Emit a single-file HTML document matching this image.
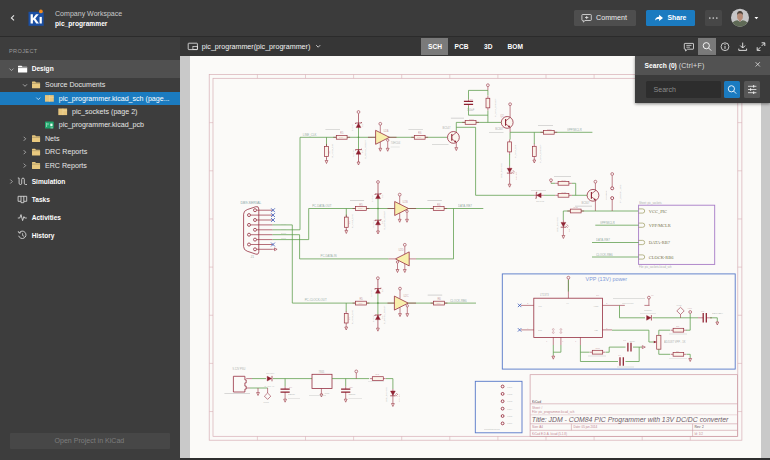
<!DOCTYPE html>
<html>
<head>
<meta charset="utf-8">
<style>
*{box-sizing:border-box;margin:0;padding:0}
html,body{width:770px;height:460px;overflow:hidden;background:#3b3b3b;font-family:"Liberation Sans",sans-serif;}
.abs{position:absolute}
.t{position:absolute;white-space:nowrap;line-height:10px;height:10px;color:#e6e6e6;font-size:7.1px}
.b{font-weight:700;color:#fff;font-size:6.6px}
#header{left:0;top:0;width:770px;height:37px;background:#3b3b3b;border-bottom:1px solid #2b2b2b}
#sidebar{left:0;top:37px;width:180px;height:423px;background:#3d3d3d}
#toolbar{left:180px;top:37px;width:590px;height:18.5px;background:#363636}
#canvas{left:180px;top:55.5px;width:590px;height:404.5px;background:#c9c9c9}
#paper{left:190px;top:55.5px;width:571.1px;height:404.5px;background:#fbfaf8}
</style>
</head>
<body>
<div class="abs" id="header"></div>
<div class="abs" id="sidebar"></div>
<div class="abs" id="toolbar"></div>
<div class="abs" id="canvas"></div>
<div class="abs" id="paper"></div>
<div class="abs" style="left:180px;top:458.4px;width:590px;height:1.6px;background:#2f2f2f"></div>

<!-- SCHEMATIC -->
<svg class="abs" id="sch" style="left:0;top:0" width="770" height="460" viewBox="0 0 770 460">
<rect x="209.2" y="74.5" width="532.7" height="365.7" fill="none" stroke="#d8aeb5" stroke-width="0.7"/>
<rect x="213" y="78.3" width="524.8" height="358" fill="none" stroke="#d8aeb5" stroke-width="0.7"/>
<path d="M257.40000000000003 74.5 L257.40000000000003 78.3" stroke="#d8aeb5" stroke-width="0.6" fill="none"/>
<path d="M257.40000000000003 436.3 L257.40000000000003 440.2" stroke="#d8aeb5" stroke-width="0.6" fill="none"/>
<path d="M305.5 74.5 L305.5 78.3" stroke="#d8aeb5" stroke-width="0.6" fill="none"/>
<path d="M305.5 436.3 L305.5 440.2" stroke="#d8aeb5" stroke-width="0.6" fill="none"/>
<path d="M353.6 74.5 L353.6 78.3" stroke="#d8aeb5" stroke-width="0.6" fill="none"/>
<path d="M353.6 436.3 L353.6 440.2" stroke="#d8aeb5" stroke-width="0.6" fill="none"/>
<path d="M401.70000000000005 74.5 L401.70000000000005 78.3" stroke="#d8aeb5" stroke-width="0.6" fill="none"/>
<path d="M401.70000000000005 436.3 L401.70000000000005 440.2" stroke="#d8aeb5" stroke-width="0.6" fill="none"/>
<path d="M449.8 74.5 L449.8 78.3" stroke="#d8aeb5" stroke-width="0.6" fill="none"/>
<path d="M449.8 436.3 L449.8 440.2" stroke="#d8aeb5" stroke-width="0.6" fill="none"/>
<path d="M497.90000000000003 74.5 L497.90000000000003 78.3" stroke="#d8aeb5" stroke-width="0.6" fill="none"/>
<path d="M497.90000000000003 436.3 L497.90000000000003 440.2" stroke="#d8aeb5" stroke-width="0.6" fill="none"/>
<path d="M546.0 74.5 L546.0 78.3" stroke="#d8aeb5" stroke-width="0.6" fill="none"/>
<path d="M546.0 436.3 L546.0 440.2" stroke="#d8aeb5" stroke-width="0.6" fill="none"/>
<path d="M594.1 74.5 L594.1 78.3" stroke="#d8aeb5" stroke-width="0.6" fill="none"/>
<path d="M594.1 436.3 L594.1 440.2" stroke="#d8aeb5" stroke-width="0.6" fill="none"/>
<path d="M642.2 74.5 L642.2 78.3" stroke="#d8aeb5" stroke-width="0.6" fill="none"/>
<path d="M642.2 436.3 L642.2 440.2" stroke="#d8aeb5" stroke-width="0.6" fill="none"/>
<path d="M690.3 74.5 L690.3 78.3" stroke="#d8aeb5" stroke-width="0.6" fill="none"/>
<path d="M690.3 436.3 L690.3 440.2" stroke="#d8aeb5" stroke-width="0.6" fill="none"/>
<path d="M209.4 122.65 L213 122.65" stroke="#d8aeb5" stroke-width="0.6" fill="none"/>
<path d="M737.8 122.65 L741.9 122.65" stroke="#d8aeb5" stroke-width="0.6" fill="none"/>
<path d="M209.4 170.8 L213 170.8" stroke="#d8aeb5" stroke-width="0.6" fill="none"/>
<path d="M737.8 170.8 L741.9 170.8" stroke="#d8aeb5" stroke-width="0.6" fill="none"/>
<path d="M209.4 218.95 L213 218.95" stroke="#d8aeb5" stroke-width="0.6" fill="none"/>
<path d="M737.8 218.95 L741.9 218.95" stroke="#d8aeb5" stroke-width="0.6" fill="none"/>
<path d="M209.4 267.1 L213 267.1" stroke="#d8aeb5" stroke-width="0.6" fill="none"/>
<path d="M737.8 267.1 L741.9 267.1" stroke="#d8aeb5" stroke-width="0.6" fill="none"/>
<path d="M209.4 315.25 L213 315.25" stroke="#d8aeb5" stroke-width="0.6" fill="none"/>
<path d="M737.8 315.25 L741.9 315.25" stroke="#d8aeb5" stroke-width="0.6" fill="none"/>
<path d="M209.4 363.4 L213 363.4" stroke="#d8aeb5" stroke-width="0.6" fill="none"/>
<path d="M737.8 363.4 L741.9 363.4" stroke="#d8aeb5" stroke-width="0.6" fill="none"/>
<path d="M209.4 411.55 L213 411.55" stroke="#d8aeb5" stroke-width="0.6" fill="none"/>
<path d="M737.8 411.55 L741.9 411.55" stroke="#d8aeb5" stroke-width="0.6" fill="none"/>
<path d="M300 229.8 L300 137.3 L447.5 137.3" fill="none" stroke="#5a9b48" stroke-width="0.75"/>
<path d="M326.5 137.3 L326.5 146" fill="none" stroke="#5a9b48" stroke-width="0.75"/>
<rect x="324.6" y="146.4" width="3.8" height="10.2" fill="#fbf3ea" stroke="#973041" stroke-width="0.7"/>
<path d="M326.5 143.9 L326.5 146.4" stroke="#973041" stroke-width="0.6" fill="none"/>
<path d="M326.5 156.6 L326.5 159.1" stroke="#973041" stroke-width="0.6" fill="none"/>
<path d="M326.5 158.5 L326.5 160.5" stroke="#973041" stroke-width="0.6" fill="none"/>
<path d="M325.1 160.5 h2.8 L326.5 163.5 z" fill="#fbf3ea" stroke="#973041" stroke-width="0.6"/>
<rect x="336.3" y="135.4" width="10.8" height="3.8" fill="#fbf3ea" stroke="#973041" stroke-width="0.7"/>
<path d="M333.3 137.3 L336.3 137.3" stroke="#973041" stroke-width="0.6" fill="none"/>
<path d="M347.09999999999997 137.3 L350.09999999999997 137.3" stroke="#973041" stroke-width="0.6" fill="none"/>
<path d="M358.5 113.5 L358.5 127.8" stroke="#973041" stroke-width="0.7" fill="none"/>
<path d="M358.5 149.2 L358.5 162" stroke="#973041" stroke-width="0.7" fill="none"/>
<path d="M358.5 127.8 L358.5 149.2" fill="none" stroke="#5a9b48" stroke-width="0.75"/>
<circle cx="358.5" cy="112" r="1.4" fill="#fbfaf8" stroke="#973041" stroke-width="0.6"/>
<path d="M356.1 127.60000000000001 h4.8 L358.5 123.2 z" fill="#8e1f2f" stroke="#8e1f2f" stroke-width="0.4"/>
<path d="M355.5 123.89999999999999 v-0.9 h6.0 v-0.9" fill="none" stroke="#8e1f2f" stroke-width="0.7"/>
<path d="M356.1 154.20000000000002 h4.8 L358.5 149.8 z" fill="#8e1f2f" stroke="#8e1f2f" stroke-width="0.4"/>
<path d="M355.5 150.5 v-0.9 h6.0 v-0.9" fill="none" stroke="#8e1f2f" stroke-width="0.7"/>
<path d="M357.1 162 h2.8 L358.5 165 z" fill="#fbf3ea" stroke="#973041" stroke-width="0.6"/>
<circle cx="358.5" cy="137.3" r="0.8" fill="#5a9b48"/>
<path d="M368 137.3 L375.6 137.3" stroke="#973041" stroke-width="0.6" fill="none"/>
<path d="M389.2 137.3 L396.5 137.3" stroke="#973041" stroke-width="0.6" fill="none"/>
<path d="M380.3 125.2 L380.3 133" stroke="#973041" stroke-width="0.6" fill="none"/>
<circle cx="380.3" cy="123.8" r="1.4" fill="#fbfaf8" stroke="#973041" stroke-width="0.6"/>
<path d="M380.3 142 L380.3 148.5" stroke="#973041" stroke-width="0.6" fill="none"/>
<path d="M378.90000000000003 148.3 h2.8 L380.3 151.3 z" fill="#fbf3ea" stroke="#973041" stroke-width="0.6"/>
<path d="M387.7 141.4 L387.7 148.5" stroke="#973041" stroke-width="0.6" fill="none"/>
<path d="M386.3 148.3 h2.8 L387.7 151.3 z" fill="#fbf3ea" stroke="#973041" stroke-width="0.6"/>
<path d="M375.6 130.3 L389.40000000000003 137.3 L375.6 144.3 z" fill="#f8efac" stroke="#973041" stroke-width="0.8" stroke-linejoin="round"/>
<circle cx="387.7" cy="140.2" r="1.2" fill="#fbfaf8" stroke="#973041" stroke-width="0.6"/>
<rect x="414.3" y="135.4" width="10.8" height="3.8" fill="#fbf3ea" stroke="#973041" stroke-width="0.7"/>
<path d="M411.3 137.3 L414.3 137.3" stroke="#973041" stroke-width="0.6" fill="none"/>
<path d="M425.09999999999997 137.3 L428.09999999999997 137.3" stroke="#973041" stroke-width="0.6" fill="none"/>
<path d="M447.5 137.4 L451.6 137.4" stroke="#973041" stroke-width="0.7" fill="none"/>
<path d="M456.3 131.5 L456.3 122.4 L501.4 122.4" fill="none" stroke="#5a9b48" stroke-width="0.75"/>
<path d="M456.3 127.3 L475.6 127.3 L475.6 195.3 L534 195.3" fill="none" stroke="#5a9b48" stroke-width="0.75"/>
<circle cx="453.4" cy="137.4" r="5.9" fill="#fbf6f0" stroke="#973041" stroke-width="0.8"/>
<path d="M451.79999999999995 134.0 v6.8" stroke="#8e1f2f" stroke-width="1.1"/>
<path d="M451.79999999999995 136.0 L456.29999999999995 132.5 M451.79999999999995 138.8 L456.29999999999995 142.3" stroke="#973041" stroke-width="0.7" fill="none"/>
<path d="M456.29999999999995 142.3 l-2.3 -0.3 l1.3 -1.7 z" fill="#8e1f2f"/>
<path d="M456.3 131.5 L456.3 133" stroke="#973041" stroke-width="0.6" fill="none"/>
<path d="M456.3 142 L456.3 147.5" stroke="#973041" stroke-width="0.6" fill="none"/>
<path d="M454.90000000000003 147.6 h2.8 L456.3 150.6 z" fill="#fbf3ea" stroke="#973041" stroke-width="0.6"/>
<rect x="465.20000000000005" y="120.5" width="10.8" height="3.8" fill="#fbf3ea" stroke="#973041" stroke-width="0.7"/>
<path d="M462.20000000000005 122.4 L465.20000000000005 122.4" stroke="#973041" stroke-width="0.6" fill="none"/>
<path d="M476.0 122.4 L479.0 122.4" stroke="#973041" stroke-width="0.6" fill="none"/>
<path d="M487.9 90.4 L468.5 90.4 L468.5 99.5" fill="none" stroke="#5a9b48" stroke-width="0.75"/>
<path d="M468.5 106 L468.5 115.2 L487.9 115.2" fill="none" stroke="#5a9b48" stroke-width="0.75"/>
<path d="M487.9 90.4 L487.9 95.5" fill="none" stroke="#5a9b48" stroke-width="0.75"/>
<path d="M487.9 110.5 L487.9 122.4" fill="none" stroke="#5a9b48" stroke-width="0.75"/>
<path d="M468.5 99.5 L468.5 101.3" stroke="#973041" stroke-width="0.6" fill="none"/>
<path d="M468.5 104.4 L468.5 106" stroke="#973041" stroke-width="0.6" fill="none"/>
<path d="M463.9 101.35 h9.2 M463.9 104.35 h9.2" stroke="#8e1f2f" stroke-width="1.25"/>
<rect x="486.0" y="98.25" width="3.8" height="9.6" fill="#fbf3ea" stroke="#973041" stroke-width="0.7"/>
<path d="M487.9 95.75 L487.9 98.25" stroke="#973041" stroke-width="0.6" fill="none"/>
<path d="M487.9 107.85 L487.9 110.35" stroke="#973041" stroke-width="0.6" fill="none"/>
<path d="M487.9 86.60000000000001 L487.9 90.4" stroke="#973041" stroke-width="0.6" fill="none"/>
<circle cx="487.9" cy="85.2" r="1.4" fill="#fbfaf8" stroke="#973041" stroke-width="0.6"/>
<path d="M501.4 122.4 L505.6 122.4" stroke="#973041" stroke-width="0.7" fill="none"/>
<circle cx="507.2" cy="122.4" r="5.9" fill="#fbf6f0" stroke="#973041" stroke-width="0.8"/>
<path d="M505.59999999999997 119.0 v6.8" stroke="#8e1f2f" stroke-width="1.1"/>
<path d="M505.59999999999997 121.0 L510.09999999999997 117.5 M505.59999999999997 123.80000000000001 L510.09999999999997 127.30000000000001" stroke="#973041" stroke-width="0.7" fill="none"/>
<path d="M510.09999999999997 127.30000000000001 l-2.3 -0.3 l1.3 -1.7 z" fill="#8e1f2f"/>
<path d="M510.1 105.60000000000001 L510.1 117.5" stroke="#973041" stroke-width="0.6" fill="none"/>
<circle cx="510.1" cy="104.2" r="1.4" fill="#fbfaf8" stroke="#973041" stroke-width="0.6"/>
<path d="M510.1 127.3 L510.1 132.3" stroke="#973041" stroke-width="0.6" fill="none"/>
<path d="M510.1 132.3 L592.4 132.3" fill="none" stroke="#5a9b48" stroke-width="0.75"/>
<path d="M510.1 132.3 L510.1 139.5" fill="none" stroke="#5a9b48" stroke-width="0.75"/>
<rect x="507.70000000000005" y="141.9" width="3.8" height="10" fill="#fbf3ea" stroke="#973041" stroke-width="0.7"/>
<path d="M509.6 139.4 L509.6 141.9" stroke="#973041" stroke-width="0.6" fill="none"/>
<path d="M509.6 151.9 L509.6 154.4" stroke="#973041" stroke-width="0.6" fill="none"/>
<path d="M509.6 154 L509.6 166" fill="none" stroke="#5a9b48" stroke-width="0.75"/>
<path d="M507.20000000000005 168.29999999999998 h4.8 L509.6 172.7 z" fill="#8e1f2f" stroke="#8e1f2f" stroke-width="0.4"/>
<path d="M506.90000000000003 173.1 h5.3999999999999995" fill="none" stroke="#8e1f2f" stroke-width="0.7"/>
<path d="M512.2 171.7 l1.6 2 M513.0 170.29999999999998 l1.6 2" stroke="#973041" stroke-width="0.5"/>
<path d="M509.6 166 L509.6 184" stroke="#973041" stroke-width="0.6" fill="none"/>
<path d="M508.20000000000005 184.2 h2.8 L509.6 187.2 z" fill="#fbf3ea" stroke="#973041" stroke-width="0.6"/>
<path d="M534.3 132.3 L534.3 144" fill="none" stroke="#5a9b48" stroke-width="0.75"/>
<rect x="532.4" y="146.3" width="3.8" height="10.2" fill="#fbf3ea" stroke="#973041" stroke-width="0.7"/>
<path d="M534.3 143.8 L534.3 146.3" stroke="#973041" stroke-width="0.6" fill="none"/>
<path d="M534.3 156.5 L534.3 159.0" stroke="#973041" stroke-width="0.6" fill="none"/>
<path d="M534.3 158.8 L534.3 160" stroke="#973041" stroke-width="0.6" fill="none"/>
<path d="M532.9 160 h2.8 L534.3 163 z" fill="#fbf3ea" stroke="#973041" stroke-width="0.6"/>
<rect x="543.4" y="130.4" width="10.8" height="3.8" fill="#fbf3ea" stroke="#973041" stroke-width="0.7"/>
<path d="M540.4 132.3 L543.4 132.3" stroke="#973041" stroke-width="0.6" fill="none"/>
<path d="M554.1999999999999 132.3 L557.1999999999999 132.3" stroke="#973041" stroke-width="0.6" fill="none"/>
<path d="M541.1 192.9 v4.8 L536.7 195.3 z" fill="#8e1f2f" stroke="#8e1f2f" stroke-width="0.4"/>
<path d="M537.2 192.3 h-0.9 v6.0 h-0.9" fill="none" stroke="#8e1f2f" stroke-width="0.7"/>
<path d="M534 195.3 L544 195.3" stroke="#973041" stroke-width="0.6" fill="none"/>
<path d="M544 195.3 L555 195.3" fill="none" stroke="#5a9b48" stroke-width="0.75"/>
<rect x="558.1" y="193.4" width="10.8" height="3.8" fill="#fbf3ea" stroke="#973041" stroke-width="0.7"/>
<path d="M555.1 195.3 L558.1 195.3" stroke="#973041" stroke-width="0.6" fill="none"/>
<path d="M568.9 195.3 L571.9 195.3" stroke="#973041" stroke-width="0.6" fill="none"/>
<path d="M572 195.3 L587 195.3" fill="none" stroke="#5a9b48" stroke-width="0.75"/>
<path d="M551 181.6 L551 183.3" stroke="#973041" stroke-width="0.6" fill="none"/>
<circle cx="551" cy="180.2" r="1.4" fill="#fbfaf8" stroke="#973041" stroke-width="0.6"/>
<path d="M551 183.3 L555 183.3" fill="none" stroke="#5a9b48" stroke-width="0.75"/>
<rect x="558.1" y="181.4" width="10.8" height="3.8" fill="#fbf3ea" stroke="#973041" stroke-width="0.7"/>
<path d="M555.1 183.3 L558.1 183.3" stroke="#973041" stroke-width="0.6" fill="none"/>
<path d="M568.9 183.3 L571.9 183.3" stroke="#973041" stroke-width="0.6" fill="none"/>
<path d="M572 183.3 L575.7 183.3 L575.7 195.3" fill="none" stroke="#5a9b48" stroke-width="0.75"/>
<path d="M587 195.3 L591.4 195.3" stroke="#973041" stroke-width="0.7" fill="none"/>
<circle cx="593" cy="195.3" r="5.9" fill="#fbf6f0" stroke="#973041" stroke-width="0.8"/>
<path d="M591.4 191.9 v6.8" stroke="#8e1f2f" stroke-width="1.1"/>
<path d="M591.4 193.9 L595.9 190.4 M591.4 196.70000000000002 L595.9 200.20000000000002" stroke="#973041" stroke-width="0.7" fill="none"/>
<path d="M595.9 200.20000000000002 l-2.3 -0.3 l1.3 -1.7 z" fill="#8e1f2f"/>
<path d="M595.4 183.1 L595.4 190.4" stroke="#973041" stroke-width="0.6" fill="none"/>
<circle cx="595.4" cy="181.7" r="1.4" fill="#fbfaf8" stroke="#973041" stroke-width="0.6"/>
<path d="M595.4 200.2 L595.4 211" stroke="#973041" stroke-width="0.6" fill="none"/>
<path d="M563.3 220 L563.3 211 L638.6 211" fill="none" stroke="#5a9b48" stroke-width="0.75"/>
<rect x="570.3000000000001" y="209.1" width="10.8" height="3.8" fill="#fbf3ea" stroke="#973041" stroke-width="0.7"/>
<path d="M567.3000000000001 211 L570.3000000000001 211" stroke="#973041" stroke-width="0.6" fill="none"/>
<path d="M581.1 211 L584.1 211" stroke="#973041" stroke-width="0.6" fill="none"/>
<path d="M561.0 222.4 h4.8 L563.4 226.8 z" fill="#8e1f2f" stroke="#8e1f2f" stroke-width="0.4"/>
<path d="M560.7 227.20000000000002 h5.3999999999999995" fill="none" stroke="#8e1f2f" stroke-width="0.7"/>
<path d="M566.0 225.8 l1.6 2 M566.8 224.4 l1.6 2" stroke="#973041" stroke-width="0.5"/>
<path d="M563.4 220 L563.4 235.5" stroke="#973041" stroke-width="0.6" fill="none"/>
<path d="M562.0 235.5 h2.8 L563.4 238.5 z" fill="#fbf3ea" stroke="#973041" stroke-width="0.6"/>
<path d="M612.2 175.4 L612.2 186.8" stroke="#973041" stroke-width="0.6" fill="none"/>
<path d="M612.2 199.6 L612.2 211" stroke="#973041" stroke-width="0.6" fill="none"/>
<circle cx="612.2" cy="174" r="1.4" fill="#fbfaf8" stroke="#973041" stroke-width="0.6"/>
<circle cx="612.2" cy="188.3" r="1.5" fill="#fbfaf8" stroke="#973041" stroke-width="0.8"/>
<circle cx="612.2" cy="198.1" r="1.5" fill="#fbfaf8" stroke="#973041" stroke-width="0.8"/>
<rect x="638.6" y="205.2" width="76.1" height="59.2" fill="none" stroke="#a77bc6" stroke-width="0.9"/>
<path d="M638.6 208.9 h4 a2.1 2.1 0 0 1 0 4.2 h-4" fill="none" stroke="#8c8a46" stroke-width="0.6"/>
<text x="648.8" y="212.5" font-family="Liberation Serif" font-size="4.45" fill="#6c6a3c" opacity="0.92" text-anchor="start" >VCC_PIC</text>
<path d="M638.6 223.1 h4 a2.1 2.1 0 0 1 0 4.2 h-4" fill="none" stroke="#8c8a46" stroke-width="0.6"/>
<text x="648.8" y="226.7" font-family="Liberation Serif" font-size="4.45" fill="#6c6a3c" opacity="0.92" text-anchor="start" >VPP/MCLR</text>
<path d="M638.6 240.4 h4 a2.1 2.1 0 0 1 0 4.2 h-4" fill="none" stroke="#8c8a46" stroke-width="0.6"/>
<text x="648.8" y="244.0" font-family="Liberation Serif" font-size="4.45" fill="#6c6a3c" opacity="0.92" text-anchor="start" >DATA-RB7</text>
<path d="M638.6 254.9 h4 a2.1 2.1 0 0 1 0 4.2 h-4" fill="none" stroke="#8c8a46" stroke-width="0.6"/>
<text x="648.8" y="258.5" font-family="Liberation Serif" font-size="4.45" fill="#6c6a3c" opacity="0.92" text-anchor="start" >CLOCK-RB6</text>
<path d="M595.3 225.2 L638.6 225.2" fill="none" stroke="#5a9b48" stroke-width="0.75"/>
<path d="M592 242.5 L638.6 242.5" fill="none" stroke="#5a9b48" stroke-width="0.75"/>
<path d="M592 257 L638.6 257" fill="none" stroke="#5a9b48" stroke-width="0.75"/>
<path d="M247.2 209.6 L255.8 206.7 Q258.8 205.9 258.8 209 L258.8 251.6 Q258.8 254.9 255.8 254.1 L247.2 251.2 Q243.6 250 243.6 246.6 L243.6 214.2 Q243.6 210.8 247.2 209.6 z" fill="none" stroke="#973041" stroke-width="0.8"/>
<path d="M256.4 210.2 L272.5 210.2" stroke="#973041" stroke-width="0.7" fill="none"/>
<circle cx="255" cy="210.2" r="1.5" fill="#fbfaf8" stroke="#973041" stroke-width="0.8"/>
<path d="M256.4 220 L272.5 220" stroke="#973041" stroke-width="0.7" fill="none"/>
<circle cx="255" cy="220" r="1.5" fill="#fbfaf8" stroke="#973041" stroke-width="0.8"/>
<path d="M256.4 229.8 L272.5 229.8" stroke="#973041" stroke-width="0.7" fill="none"/>
<circle cx="255" cy="229.8" r="1.5" fill="#fbfaf8" stroke="#973041" stroke-width="0.8"/>
<path d="M256.4 239.6 L272.5 239.6" stroke="#973041" stroke-width="0.7" fill="none"/>
<circle cx="255" cy="239.6" r="1.5" fill="#fbfaf8" stroke="#973041" stroke-width="0.8"/>
<path d="M256.4 249.3 L272.5 249.3" stroke="#973041" stroke-width="0.7" fill="none"/>
<circle cx="255" cy="249.3" r="1.5" fill="#fbfaf8" stroke="#973041" stroke-width="0.8"/>
<path d="M250.4 215.1 L272.5 215.1" stroke="#973041" stroke-width="0.7" fill="none"/>
<circle cx="249" cy="215.1" r="1.5" fill="#fbfaf8" stroke="#973041" stroke-width="0.8"/>
<path d="M250.4 224.9 L272.5 224.9" stroke="#973041" stroke-width="0.7" fill="none"/>
<circle cx="249" cy="224.9" r="1.5" fill="#fbfaf8" stroke="#973041" stroke-width="0.8"/>
<path d="M250.4 234.7 L272.5 234.7" stroke="#973041" stroke-width="0.7" fill="none"/>
<circle cx="249" cy="234.7" r="1.5" fill="#fbfaf8" stroke="#973041" stroke-width="0.8"/>
<path d="M250.4 244.5 L272.5 244.5" stroke="#973041" stroke-width="0.7" fill="none"/>
<circle cx="249" cy="244.5" r="1.5" fill="#fbfaf8" stroke="#973041" stroke-width="0.8"/>
<path d="M271.1 208.29999999999998 l3.8 3.8 M274.9 208.29999999999998 l-3.8 3.8" stroke="#3656b8" stroke-width="0.8"/>
<path d="M271.1 213.2 l3.8 3.8 M274.9 213.2 l-3.8 3.8" stroke="#3656b8" stroke-width="0.8"/>
<path d="M271.1 218.1 l3.8 3.8 M274.9 218.1 l-3.8 3.8" stroke="#3656b8" stroke-width="0.8"/>
<path d="M271.1 242.6 l3.8 3.8 M274.9 242.6 l-3.8 3.8" stroke="#3656b8" stroke-width="0.8"/>
<path d="M274.5 247.9 l2.6 1.4 l-2.6 1.4 z" fill="none" stroke="#973041" stroke-width="0.6"/>
<path d="M272.5 249.3 L274.5 249.3" stroke="#973041" stroke-width="0.6" fill="none"/>
<path d="M272.5 224.9 L292.3 224.9 L292.3 303.1 L476 303.1" fill="none" stroke="#5a9b48" stroke-width="0.75"/>
<path d="M272.5 229.8 L300 229.8" fill="none" stroke="#5a9b48" stroke-width="0.75"/>
<path d="M272.5 234.7 L299.6 234.7 L299.6 258.9 L388.5 258.9" fill="none" stroke="#5a9b48" stroke-width="0.75"/>
<path d="M272.5 239.6 L308.7 239.6 L308.7 208.5 L483.3 208.5" fill="none" stroke="#5a9b48" stroke-width="0.75"/>
<path d="M346.3 208.5 L346.3 217" fill="none" stroke="#5a9b48" stroke-width="0.75"/>
<rect x="344.40000000000003" y="217.1" width="3.8" height="10.2" fill="#fbf3ea" stroke="#973041" stroke-width="0.7"/>
<path d="M346.3 214.6 L346.3 217.1" stroke="#973041" stroke-width="0.6" fill="none"/>
<path d="M346.3 227.29999999999998 L346.3 229.79999999999998" stroke="#973041" stroke-width="0.6" fill="none"/>
<path d="M346.3 229.0 L346.3 230.5" stroke="#973041" stroke-width="0.6" fill="none"/>
<path d="M344.90000000000003 230.5 h2.8 L346.3 233.5 z" fill="#fbf3ea" stroke="#973041" stroke-width="0.6"/>
<rect x="355.5" y="206.6" width="10.8" height="3.8" fill="#fbf3ea" stroke="#973041" stroke-width="0.7"/>
<path d="M352.5 208.5 L355.5 208.5" stroke="#973041" stroke-width="0.6" fill="none"/>
<path d="M366.29999999999995 208.5 L369.29999999999995 208.5" stroke="#973041" stroke-width="0.6" fill="none"/>
<path d="M378 183.5 L378 198.8" stroke="#973041" stroke-width="0.7" fill="none"/>
<path d="M378 219.8 L378 231" stroke="#973041" stroke-width="0.7" fill="none"/>
<path d="M378 198.8 L378 219.8" fill="none" stroke="#5a9b48" stroke-width="0.75"/>
<circle cx="378" cy="182" r="1.4" fill="#fbfaf8" stroke="#973041" stroke-width="0.6"/>
<path d="M375.6 198.6 h4.8 L378 194.2 z" fill="#8e1f2f" stroke="#8e1f2f" stroke-width="0.4"/>
<path d="M375.0 194.89999999999998 v-0.9 h6.0 v-0.9" fill="none" stroke="#8e1f2f" stroke-width="0.7"/>
<path d="M375.6 224.8 h4.8 L378 220.4 z" fill="#8e1f2f" stroke="#8e1f2f" stroke-width="0.4"/>
<path d="M375.0 221.1 v-0.9 h6.0 v-0.9" fill="none" stroke="#8e1f2f" stroke-width="0.7"/>
<path d="M376.6 231 h2.8 L378 234 z" fill="#fbf3ea" stroke="#973041" stroke-width="0.6"/>
<circle cx="378" cy="208.5" r="0.8" fill="#5a9b48"/>
<path d="M387.5 208.5 L394.6 208.5" stroke="#973041" stroke-width="0.6" fill="none"/>
<path d="M408.6 208.5 L416 208.5" stroke="#973041" stroke-width="0.6" fill="none"/>
<path d="M399.7 196 L399.7 204" stroke="#973041" stroke-width="0.6" fill="none"/>
<circle cx="399.7" cy="194.6" r="1.4" fill="#fbfaf8" stroke="#973041" stroke-width="0.6"/>
<path d="M399.7 213 L399.7 219.5" stroke="#973041" stroke-width="0.6" fill="none"/>
<path d="M398.3 219.3 h2.8 L399.7 222.3 z" fill="#fbf3ea" stroke="#973041" stroke-width="0.6"/>
<path d="M407 212.5 L407 219.5" stroke="#973041" stroke-width="0.6" fill="none"/>
<path d="M405.6 219.3 h2.8 L407 222.3 z" fill="#fbf3ea" stroke="#973041" stroke-width="0.6"/>
<path d="M394.7 201.5 L408.5 208.5 L394.7 215.5 z" fill="#f8efac" stroke="#973041" stroke-width="0.8" stroke-linejoin="round"/>
<circle cx="407" cy="211.3" r="1.2" fill="#fbfaf8" stroke="#973041" stroke-width="0.6"/>
<rect x="433.3" y="206.6" width="10.8" height="3.8" fill="#fbf3ea" stroke="#973041" stroke-width="0.7"/>
<path d="M430.3 208.5 L433.3 208.5" stroke="#973041" stroke-width="0.6" fill="none"/>
<path d="M444.09999999999997 208.5 L447.09999999999997 208.5" stroke="#973041" stroke-width="0.6" fill="none"/>
<path d="M453.5 208.5 L453.5 258.9 L416 258.9" fill="none" stroke="#5a9b48" stroke-width="0.75"/>
<path d="M475.4 170 L475.4 170" fill="none" stroke="#5a9b48" stroke-width="0.75"/>
<path d="M388.5 258.9 L395.2 258.9" stroke="#973041" stroke-width="0.6" fill="none"/>
<path d="M409.2 258.9 L416 258.9" stroke="#973041" stroke-width="0.6" fill="none"/>
<path d="M404.8 246.2 L404.8 254.5" stroke="#973041" stroke-width="0.6" fill="none"/>
<circle cx="404.8" cy="244.8" r="1.4" fill="#fbfaf8" stroke="#973041" stroke-width="0.6"/>
<path d="M404.8 263.5 L404.8 269.6" stroke="#973041" stroke-width="0.6" fill="none"/>
<path d="M403.40000000000003 269.5 h2.8 L404.8 272.5 z" fill="#fbf3ea" stroke="#973041" stroke-width="0.6"/>
<path d="M397.5 263.2 L397.5 269.6" stroke="#973041" stroke-width="0.6" fill="none"/>
<path d="M396.1 269.5 h2.8 L397.5 272.5 z" fill="#fbf3ea" stroke="#973041" stroke-width="0.6"/>
<path d="M409.2 251.89999999999998 L395.4 258.9 L409.2 265.9 z" fill="#f8efac" stroke="#973041" stroke-width="0.8" stroke-linejoin="round"/>
<circle cx="397.5" cy="262" r="1.2" fill="#fbfaf8" stroke="#973041" stroke-width="0.6"/>
<path d="M346.2 303.1 L346.2 311.5" fill="none" stroke="#5a9b48" stroke-width="0.75"/>
<rect x="344.3" y="313.6" width="3.8" height="9.4" fill="#fbf3ea" stroke="#973041" stroke-width="0.7"/>
<path d="M346.2 311.1 L346.2 313.6" stroke="#973041" stroke-width="0.6" fill="none"/>
<path d="M346.2 323.0 L346.2 325.5" stroke="#973041" stroke-width="0.6" fill="none"/>
<path d="M346.2 325.5 L346.2 327" stroke="#973041" stroke-width="0.6" fill="none"/>
<path d="M344.8 327 h2.8 L346.2 330 z" fill="#fbf3ea" stroke="#973041" stroke-width="0.6"/>
<rect x="355.6" y="301.20000000000005" width="10.8" height="3.8" fill="#fbf3ea" stroke="#973041" stroke-width="0.7"/>
<path d="M352.6 303.1 L355.6 303.1" stroke="#973041" stroke-width="0.6" fill="none"/>
<path d="M366.4 303.1 L369.4 303.1" stroke="#973041" stroke-width="0.6" fill="none"/>
<path d="M377.9 279.6 L377.9 293.4" stroke="#973041" stroke-width="0.7" fill="none"/>
<path d="M377.9 314.6 L377.9 328" stroke="#973041" stroke-width="0.7" fill="none"/>
<path d="M377.9 293.4 L377.9 314.6" fill="none" stroke="#5a9b48" stroke-width="0.75"/>
<circle cx="377.9" cy="278.2" r="1.4" fill="#fbfaf8" stroke="#973041" stroke-width="0.6"/>
<path d="M375.5 293.2 h4.8 L377.9 288.8 z" fill="#8e1f2f" stroke="#8e1f2f" stroke-width="0.4"/>
<path d="M374.9 289.50000000000006 v-0.9 h6.0 v-0.9" fill="none" stroke="#8e1f2f" stroke-width="0.7"/>
<path d="M375.5 319.59999999999997 h4.8 L377.9 315.2 z" fill="#8e1f2f" stroke="#8e1f2f" stroke-width="0.4"/>
<path d="M374.9 315.90000000000003 v-0.9 h6.0 v-0.9" fill="none" stroke="#8e1f2f" stroke-width="0.7"/>
<path d="M376.5 328.2 h2.8 L377.9 331.2 z" fill="#fbf3ea" stroke="#973041" stroke-width="0.6"/>
<circle cx="377.9" cy="303.1" r="0.8" fill="#5a9b48"/>
<path d="M387.5 303.1 L394.4 303.1" stroke="#973041" stroke-width="0.6" fill="none"/>
<path d="M408.4 303.1 L416 303.1" stroke="#973041" stroke-width="0.6" fill="none"/>
<path d="M400 290 L400 298.5" stroke="#973041" stroke-width="0.6" fill="none"/>
<circle cx="400" cy="288.6" r="1.4" fill="#fbfaf8" stroke="#973041" stroke-width="0.6"/>
<path d="M400 307.5 L400 313.8" stroke="#973041" stroke-width="0.6" fill="none"/>
<path d="M398.6 313.6 h2.8 L400 316.6 z" fill="#fbf3ea" stroke="#973041" stroke-width="0.6"/>
<path d="M407.3 307 L407.3 313.8" stroke="#973041" stroke-width="0.6" fill="none"/>
<path d="M405.90000000000003 313.6 h2.8 L407.3 316.6 z" fill="#fbf3ea" stroke="#973041" stroke-width="0.6"/>
<path d="M394.4 296.1 L408.2 303.1 L394.4 310.1 z" fill="#f8efac" stroke="#973041" stroke-width="0.8" stroke-linejoin="round"/>
<circle cx="407.3" cy="305.8" r="1.2" fill="#fbfaf8" stroke="#973041" stroke-width="0.6"/>
<rect x="433.6" y="301.20000000000005" width="10.8" height="3.8" fill="#fbf3ea" stroke="#973041" stroke-width="0.7"/>
<path d="M430.6 303.1 L433.6 303.1" stroke="#973041" stroke-width="0.6" fill="none"/>
<path d="M444.4 303.1 L447.4 303.1" stroke="#973041" stroke-width="0.6" fill="none"/>
<rect x="502.3" y="273.9" width="232.9" height="95.2" fill="none" stroke="#5577c8" stroke-width="0.9"/>
<text x="585.6" y="281.2" font-family="Liberation Sans" font-size="5.4" fill="#5a7fd0" opacity="0.78" text-anchor="start" >VPP (13V) power</text>
<rect x="533.8" y="298.2" width="68.7" height="39.2" fill="none" stroke="#973041" stroke-width="0.8"/>
<path d="M568.4 279.09999999999997 L568.4 298.2" stroke="#973041" stroke-width="0.6" fill="none"/>
<circle cx="568.4" cy="277.7" r="1.4" fill="#fbfaf8" stroke="#973041" stroke-width="0.6"/>
<path d="M568.4 280 L568.4 291.5" fill="none" stroke="#5a9b48" stroke-width="0.75"/>
<path d="M521 305.4 L533.8 305.4" stroke="#973041" stroke-width="0.6" fill="none"/>
<path d="M517.9 303.7 l3.4 3.4 M521.3000000000001 303.7 l-3.4 3.4" stroke="#3656b8" stroke-width="0.8"/>
<path d="M521 329.9 L533.8 329.9" stroke="#973041" stroke-width="0.6" fill="none"/>
<path d="M517.9 328.2 l3.4 3.4 M521.3000000000001 328.2 l-3.4 3.4" stroke="#3656b8" stroke-width="0.8"/>
<path d="M602.5 305.4 L624.8 305.4" stroke="#973041" stroke-width="0.6" fill="none"/>
<path d="M619.5 305.4 L619.5 317.8 L645 317.8" fill="none" stroke="#5a9b48" stroke-width="0.75"/>
<path d="M646.6 315.40000000000003 v4.8 L651.0 317.8 z" fill="#8e1f2f" stroke="#8e1f2f" stroke-width="0.4"/>
<path d="M651.4 315.1 v5.3999999999999995" fill="none" stroke="#8e1f2f" stroke-width="0.7"/>
<path d="M652.5 317.8 L690.2 317.8" fill="none" stroke="#5a9b48" stroke-width="0.75"/>
<path d="M690.2 313.4 L690.2 330.2 L686 330.2" fill="none" stroke="#5a9b48" stroke-width="0.75"/>
<path d="M690.2 317.8 L698 317.8" fill="none" stroke="#5a9b48" stroke-width="0.75"/>
<circle cx="690.2" cy="312" r="1.4" fill="#fbfaf8" stroke="#973041" stroke-width="0.6"/>
<path d="M680.5 307.3 l3.7 3.6 l-3.7 3.6 l-3.7 -3.6 z" fill="#fbfaf8" stroke="#973041" stroke-width="0.6"/>
<path d="M680.5 314.5 L680.5 317.8" stroke="#973041" stroke-width="0.6" fill="none"/>
<path d="M698 317.8 L703.2 317.8" stroke="#973041" stroke-width="0.6" fill="none"/>
<path d="M706.3 317.8 L712 317.8" stroke="#973041" stroke-width="0.6" fill="none"/>
<path d="M703.2 313.0 v9.6 M706.3 313.0 v9.6" stroke="#8e1f2f" stroke-width="1.25"/>
<path d="M710 317.8 L717.3 317.8 L717.3 321.5" fill="none" stroke="#5a9b48" stroke-width="0.75"/>
<path d="M717.3 321.4 L717.3 322" stroke="#973041" stroke-width="0.6" fill="none"/>
<path d="M715.9 322 h2.8 L717.3 325 z" fill="#fbf3ea" stroke="#973041" stroke-width="0.6"/>
<path d="M648.9 299.0 L648.9 305.4" stroke="#973041" stroke-width="0.6" fill="none"/>
<circle cx="648.9" cy="297.6" r="1.4" fill="#fbfaf8" stroke="#973041" stroke-width="0.6"/>
<path d="M644.4 305.4 L649.6 305.4" stroke="#973041" stroke-width="0.6" fill="none"/>
<path d="M602.5 329.9 L612 329.9" stroke="#973041" stroke-width="0.6" fill="none"/>
<path d="M612 330.2 L648.9 330.2 L648.9 342 L654 342" fill="none" stroke="#5a9b48" stroke-width="0.75"/>
<rect x="656.7" y="335.3" width="4.2" height="13.9" fill="#fbf3ea" stroke="#973041" stroke-width="0.7"/>
<path d="M654 342 L656.5 342" stroke="#973041" stroke-width="0.6" fill="none"/>
<path d="M653.8 340.8 l2.6 1.2 l-2.6 1.2 z" fill="#8e1f2f"/>
<path d="M658.8 335.3 L658.8 330.2 L670 330.2" fill="none" stroke="#5a9b48" stroke-width="0.75"/>
<rect x="673.1" y="328.3" width="10.6" height="3.8" fill="#fbf3ea" stroke="#973041" stroke-width="0.7"/>
<path d="M670.6 330.2 L673.1 330.2" stroke="#973041" stroke-width="0.6" fill="none"/>
<path d="M683.6999999999999 330.2 L686.1999999999999 330.2" stroke="#973041" stroke-width="0.6" fill="none"/>
<path d="M658.8 349.2 L658.8 354.3 L670 354.3" fill="none" stroke="#5a9b48" stroke-width="0.75"/>
<rect x="673.1" y="352.40000000000003" width="10.6" height="3.8" fill="#fbf3ea" stroke="#973041" stroke-width="0.7"/>
<path d="M670.6 354.3 L673.1 354.3" stroke="#973041" stroke-width="0.6" fill="none"/>
<path d="M683.6999999999999 354.3 L686.1999999999999 354.3" stroke="#973041" stroke-width="0.6" fill="none"/>
<path d="M686.5 354.3 L690.2 354.3 L690.2 358" fill="none" stroke="#5a9b48" stroke-width="0.75"/>
<path d="M690.2 358.0 L690.2 358.5" stroke="#973041" stroke-width="0.6" fill="none"/>
<path d="M688.8000000000001 358.5 h2.8 L690.2 361.5 z" fill="#fbf3ea" stroke="#973041" stroke-width="0.6"/>
<path d="M580.4 337.4 L580.4 345" stroke="#973041" stroke-width="0.6" fill="none"/>
<path d="M580.4 345 L580.4 361.5 L618 361.5" fill="none" stroke="#5a9b48" stroke-width="0.75"/>
<path d="M580.4 352.2 L589.5 352.2" fill="none" stroke="#5a9b48" stroke-width="0.75"/>
<rect x="592.3" y="350.3" width="10.4" height="3.8" fill="#fbf3ea" stroke="#973041" stroke-width="0.7"/>
<path d="M589.8 352.2 L592.3 352.2" stroke="#973041" stroke-width="0.6" fill="none"/>
<path d="M602.7 352.2 L605.2 352.2" stroke="#973041" stroke-width="0.6" fill="none"/>
<path d="M605.5 352.2 L609.2 352.2 L609.2 347.1 L625.5 347.1" fill="none" stroke="#5a9b48" stroke-width="0.75"/>
<path d="M627.9000000000001 342.8 v8.6 M631.0 342.8 v8.6" stroke="#8e1f2f" stroke-width="1.25"/>
<path d="M633 347.1 L642.3 347.1" fill="none" stroke="#5a9b48" stroke-width="0.75"/>
<path d="M642.3 345.7 l3 1.4 l-3 1.4 z" fill="#fbfaf8" stroke="#973041" stroke-width="0.6"/>
<path d="M620.0 357.2 v8.6 M623.3 357.2 v8.6" stroke="#8e1f2f" stroke-width="1.25"/>
<path d="M625.5 361.5 L639.2 361.5 L639.2 347.1" fill="none" stroke="#5a9b48" stroke-width="0.75"/>
<path d="M553.3 337.4 L553.3 345" stroke="#973041" stroke-width="0.6" fill="none"/>
<path d="M560.9 337.4 L560.9 345" stroke="#973041" stroke-width="0.6" fill="none"/>
<path d="M560.9 345 L560.9 352.2 L553.3 352.2" fill="none" stroke="#5a9b48" stroke-width="0.75"/>
<path d="M553.3 345 L553.3 355.6" fill="none" stroke="#5a9b48" stroke-width="0.75"/>
<path d="M553.3 355.59999999999997 L553.3 356.2" stroke="#973041" stroke-width="0.6" fill="none"/>
<path d="M551.9 356.2 h2.8 L553.3 359.2 z" fill="#fbf3ea" stroke="#973041" stroke-width="0.6"/>
<circle cx="553.3" cy="329.5" r="0.9" fill="none" stroke="#973041" stroke-width="0.4" opacity="0.7"/><circle cx="553.3" cy="332.5" r="0.9" fill="none" stroke="#973041" stroke-width="0.4" opacity="0.7"/>
<circle cx="560.9" cy="329.5" r="0.9" fill="none" stroke="#973041" stroke-width="0.4" opacity="0.7"/><circle cx="560.9" cy="332.5" r="0.9" fill="none" stroke="#973041" stroke-width="0.4" opacity="0.7"/>
<rect x="475.3" y="381.3" width="46.7" height="51.5" fill="none" stroke="#5577c8" stroke-width="0.9"/>
<circle cx="502.6" cy="386.5" r="1.4" fill="#fbfaf8" stroke="#973041" stroke-width="0.9"/>
<circle cx="502.6" cy="393.88" r="1.4" fill="#fbfaf8" stroke="#973041" stroke-width="0.9"/>
<circle cx="502.6" cy="401.26" r="1.4" fill="#fbfaf8" stroke="#973041" stroke-width="0.9"/>
<circle cx="502.6" cy="408.64" r="1.4" fill="#fbfaf8" stroke="#973041" stroke-width="0.9"/>
<circle cx="502.6" cy="416.02" r="1.4" fill="#fbfaf8" stroke="#973041" stroke-width="0.9"/>
<circle cx="502.6" cy="423.4" r="1.4" fill="#fbfaf8" stroke="#973041" stroke-width="0.9"/>
<path d="M233.4 376.3 h11.5 v3.6 h1.3 v3 h-1.3 v3.2 h1.3 v3 h-1.3 v2.9 h-11.5 z" fill="none" stroke="#973041" stroke-width="0.8"/>
<path d="M246.2 378.6 L252 378.6" stroke="#973041" stroke-width="0.6" fill="none"/>
<path d="M252 378.6 L266 378.6" fill="none" stroke="#5a9b48" stroke-width="0.75"/>
<path d="M267.20000000000005 376.20000000000005 v4.8 L271.6 378.6 z" fill="#8e1f2f" stroke="#8e1f2f" stroke-width="0.4"/>
<path d="M272.0 375.90000000000003 v5.3999999999999995" fill="none" stroke="#8e1f2f" stroke-width="0.7"/>
<path d="M273 378.6 L312 378.6" fill="none" stroke="#5a9b48" stroke-width="0.75"/>
<path d="M285.1 378.6 L285.1 386.5" fill="none" stroke="#5a9b48" stroke-width="0.75"/>
<path d="M285.1 386.5 L285.1 389.1" stroke="#973041" stroke-width="0.6" fill="none"/>
<path d="M285.1 392 L285.1 399" stroke="#973041" stroke-width="0.6" fill="none"/>
<path d="M280.5 389.1 h9.2 M280.5 392.1 h9.2" stroke="#8e1f2f" stroke-width="1.25"/>
<path d="M283.70000000000005 399.2 h2.8 L285.1 402.2 z" fill="#fbf3ea" stroke="#973041" stroke-width="0.6"/>
<path d="M246.2 388 L250 388" stroke="#973041" stroke-width="0.6" fill="none"/>
<path d="M250 388 L267.6 388" fill="none" stroke="#5a9b48" stroke-width="0.75"/>
<path d="M258 388 L258 392.5" stroke="#973041" stroke-width="0.6" fill="none"/>
<path d="M256.6 392.5 h2.8 L258 395.5 z" fill="#fbf3ea" stroke="#973041" stroke-width="0.6"/>
<path d="M267.6 388 L267.6 393" stroke="#973041" stroke-width="0.6" fill="none"/>
<path d="M267.6 393 l3.2 3.2 l-3.2 3.2 l-3.2 -3.2 z" fill="#fbfaf8" stroke="#973041" stroke-width="0.6"/>
<rect x="312" y="374.3" width="20" height="14.3" fill="none" stroke="#973041" stroke-width="0.8"/>
<path d="M321.4 388.6 L321.4 394" stroke="#973041" stroke-width="0.6" fill="none"/>
<path d="M320.0 394 h2.8 L321.4 397 z" fill="#fbf3ea" stroke="#973041" stroke-width="0.6"/>
<path d="M332 378.6 L369 378.6" fill="none" stroke="#5a9b48" stroke-width="0.75"/>
<path d="M345.7 378.6 L345.7 386.5" fill="none" stroke="#5a9b48" stroke-width="0.75"/>
<path d="M345.7 386.5 L345.7 389.1" stroke="#973041" stroke-width="0.6" fill="none"/>
<path d="M345.7 392 L345.7 399" stroke="#973041" stroke-width="0.6" fill="none"/>
<path d="M341.09999999999997 389.1 h9.2 M341.09999999999997 392.1 h9.2" stroke="#8e1f2f" stroke-width="1.25"/>
<path d="M344.3 399.2 h2.8 L345.7 402.2 z" fill="#fbf3ea" stroke="#973041" stroke-width="0.6"/>
<path d="M356.3 372.79999999999995 L356.3 378.6" stroke="#973041" stroke-width="0.6" fill="none"/>
<circle cx="356.3" cy="371.4" r="1.4" fill="#fbfaf8" stroke="#973041" stroke-width="0.6"/>
<rect x="372.3" y="376.70000000000005" width="11" height="3.8" fill="#fbf3ea" stroke="#973041" stroke-width="0.7"/>
<path d="M369.8 378.6 L372.3 378.6" stroke="#973041" stroke-width="0.6" fill="none"/>
<path d="M383.3 378.6 L385.8 378.6" stroke="#973041" stroke-width="0.6" fill="none"/>
<path d="M386 378.6 L392.9 378.6 L392.9 389" fill="none" stroke="#5a9b48" stroke-width="0.75"/>
<path d="M390.5 391.0 h4.8 L392.9 395.4 z" fill="#8e1f2f" stroke="#8e1f2f" stroke-width="0.4"/>
<path d="M390.2 395.79999999999995 h5.3999999999999995" fill="none" stroke="#8e1f2f" stroke-width="0.7"/>
<path d="M395.5 394.4 l1.6 2 M396.29999999999995 393.0 l1.6 2" stroke="#973041" stroke-width="0.5"/>
<path d="M392.9 389 L392.9 403.5" stroke="#973041" stroke-width="0.6" fill="none"/>
<path d="M391.5 403.5 h2.8 L392.9 406.5 z" fill="#fbf3ea" stroke="#973041" stroke-width="0.6"/>
<rect x="530.1" y="374.7" width="207.3" height="61.8" fill="none" stroke="#cd9aa3" stroke-width="0.7"/>
<path d="M530 403.8 L737.4 403.8" stroke="#cd9aa3" stroke-width="0.6" fill="none"/>
<path d="M530 423.8 L737.4 423.8" stroke="#cd9aa3" stroke-width="0.6" fill="none"/>
<path d="M530 430.3 L737.4 430.3" stroke="#cd9aa3" stroke-width="0.6" fill="none"/>
<path d="M530 414.8 L737.4 414.8" stroke="#dcb9bf" stroke-width="0.5" fill="none"/>
<path d="M571.4 423.8 L571.4 430.3" stroke="#cd9aa3" stroke-width="0.6" fill="none"/>
<path d="M692.6 423.8 L692.6 436.5" stroke="#cd9aa3" stroke-width="0.6" fill="none"/>
<text x="531.8" y="422.2" font-family="Liberation Sans" font-style="italic" font-size="8.1" fill="#5a4753" opacity="0.88" textLength="196.5" lengthAdjust="spacingAndGlyphs">Title: JDM - COM84 PIC Programmer with 13V DC/DC converter</text>
<text x="532" y="402.6" font-family="Liberation Sans" font-size="3.3" fill="#3a2a30" opacity="0.9" text-anchor="start" >KiCad</text>
<text x="532" y="408.6" font-family="Liberation Sans" font-size="3" fill="#b06070" opacity="0.75" text-anchor="start" >Sheet: /</text>
<text x="532" y="413.2" font-family="Liberation Sans" font-size="3" fill="#b06070" opacity="0.75" text-anchor="start" >File: pic_programmer.kicad_sch</text>
<text x="532" y="428.3" font-family="Liberation Sans" font-size="3" fill="#b06070" opacity="0.8" text-anchor="start" >Size: A4</text>
<text x="573.5" y="428.3" font-family="Liberation Sans" font-size="3" fill="#b06070" opacity="0.8" text-anchor="start" >Date: 05 jan 2014</text>
<text x="694.5" y="428.3" font-family="Liberation Sans" font-size="3.2" fill="#4a3040" opacity="0.9" text-anchor="start" >Rev: 2</text>
<text x="532" y="434.7" font-family="Liberation Sans" font-size="3" fill="#b06070" opacity="0.75" text-anchor="start" >KiCad E.D.A.  kicad (5.1.8)</text>
<text x="694.5" y="434.7" font-family="Liberation Sans" font-size="3" fill="#b06070" opacity="0.75" text-anchor="start" >Id: 1/2</text>
<text x="340.09999999999997" y="134.3" font-family="Liberation Sans" font-size="2.6" fill="#b47a84" opacity="0.75" text-anchor="start" >R5</text>
<text x="339.09999999999997" y="138.20000000000002" font-family="Liberation Sans" font-size="2.4" fill="#b47a84" opacity="0.6" text-anchor="start" >10K</text>
<path d="M325.4 129.3 H340" stroke="#8f8f8f" stroke-width="0.45" opacity="0.8"/>
<text x="418.09999999999997" y="134.3" font-family="Liberation Sans" font-size="2.6" fill="#b47a84" opacity="0.75" text-anchor="start" >R6</text>
<text x="417.09999999999997" y="138.20000000000002" font-family="Liberation Sans" font-size="2.4" fill="#b47a84" opacity="0.6" text-anchor="start" >10K</text>
<path d="M408.4 129.3 H422.9" stroke="#8f8f8f" stroke-width="0.45" opacity="0.8"/>
<text transform="translate(332.9 157.5) rotate(-90)" font-family="Liberation Sans" font-size="2.4" fill="#9a9a9a" opacity="0.7">R_Axial_DIN</text>
<text transform="translate(329.9 153.5) rotate(-90)" font-family="Liberation Sans" font-size="2.4" fill="#b47a84" opacity="0.6">R1</text>
<text transform="translate(353.0 131.2) rotate(-90)" font-family="Liberation Sans" font-size="2.4" fill="#9a9a9a" opacity="0.5">BAT43</text>
<text transform="translate(363.1 126.7) rotate(-90)" font-family="Liberation Sans" font-size="2.4" fill="#b47a84" opacity="0.6">D2</text>
<text transform="translate(365.7 158.8) rotate(-90)" font-family="Liberation Sans" font-size="2.3" fill="#9a9a9a" opacity="0.7">D_DO-35_SOD27</text>
<text transform="translate(354.3 156.8) rotate(-90)" font-family="Liberation Sans" font-size="2.4" fill="#9a9a9a" opacity="0.6">BAT43</text>
<text transform="translate(363.1 153.3) rotate(-90)" font-family="Liberation Sans" font-size="2.4" fill="#b47a84" opacity="0.6">D3</text>
<text x="359.29999999999995" y="205.5" font-family="Liberation Sans" font-size="2.6" fill="#b47a84" opacity="0.75" text-anchor="start" >R5</text>
<text x="358.29999999999995" y="209.4" font-family="Liberation Sans" font-size="2.4" fill="#b47a84" opacity="0.6" text-anchor="start" >10K</text>
<path d="M350 200.5 H364.1" stroke="#8f8f8f" stroke-width="0.45" opacity="0.8"/>
<text x="437.09999999999997" y="205.5" font-family="Liberation Sans" font-size="2.6" fill="#b47a84" opacity="0.75" text-anchor="start" >R6</text>
<text x="436.09999999999997" y="209.4" font-family="Liberation Sans" font-size="2.4" fill="#b47a84" opacity="0.6" text-anchor="start" >10K</text>
<path d="M427.4 200.5 H441.9" stroke="#8f8f8f" stroke-width="0.45" opacity="0.8"/>
<text transform="translate(352.7 228.2) rotate(-90)" font-family="Liberation Sans" font-size="2.4" fill="#9a9a9a" opacity="0.7">R_Axial_DIN</text>
<text transform="translate(349.7 224.2) rotate(-90)" font-family="Liberation Sans" font-size="2.4" fill="#b47a84" opacity="0.6">R1</text>
<text transform="translate(372.5 202.2) rotate(-90)" font-family="Liberation Sans" font-size="2.4" fill="#9a9a9a" opacity="0.5">BAT43</text>
<text transform="translate(382.6 197.7) rotate(-90)" font-family="Liberation Sans" font-size="2.4" fill="#b47a84" opacity="0.6">D2</text>
<text transform="translate(385.2 229.4) rotate(-90)" font-family="Liberation Sans" font-size="2.3" fill="#9a9a9a" opacity="0.7">D_DO-35_SOD27</text>
<text transform="translate(373.8 227.4) rotate(-90)" font-family="Liberation Sans" font-size="2.4" fill="#9a9a9a" opacity="0.6">BAT43</text>
<text transform="translate(382.6 223.9) rotate(-90)" font-family="Liberation Sans" font-size="2.4" fill="#b47a84" opacity="0.6">D3</text>
<text x="359.4" y="300.1" font-family="Liberation Sans" font-size="2.6" fill="#b47a84" opacity="0.75" text-anchor="start" >R5</text>
<text x="358.4" y="304.0" font-family="Liberation Sans" font-size="2.4" fill="#b47a84" opacity="0.6" text-anchor="start" >10K</text>
<text x="437.4" y="300.1" font-family="Liberation Sans" font-size="2.6" fill="#b47a84" opacity="0.75" text-anchor="start" >R6</text>
<text x="436.4" y="304.0" font-family="Liberation Sans" font-size="2.4" fill="#b47a84" opacity="0.6" text-anchor="start" >10K</text>
<path d="M427.7 295.1 H442.2" stroke="#8f8f8f" stroke-width="0.45" opacity="0.8"/>
<text transform="translate(352.59999999999997 324.3) rotate(-90)" font-family="Liberation Sans" font-size="2.4" fill="#9a9a9a" opacity="0.7">R_Axial_DIN</text>
<text transform="translate(349.59999999999997 320.3) rotate(-90)" font-family="Liberation Sans" font-size="2.4" fill="#b47a84" opacity="0.6">R1</text>
<text transform="translate(372.4 296.8) rotate(-90)" font-family="Liberation Sans" font-size="2.4" fill="#9a9a9a" opacity="0.5">BAT43</text>
<text transform="translate(382.5 292.3) rotate(-90)" font-family="Liberation Sans" font-size="2.4" fill="#b47a84" opacity="0.6">D2</text>
<text transform="translate(385.09999999999997 324.2) rotate(-90)" font-family="Liberation Sans" font-size="2.3" fill="#9a9a9a" opacity="0.7">D_DO-35_SOD27</text>
<text transform="translate(373.7 322.2) rotate(-90)" font-family="Liberation Sans" font-size="2.4" fill="#9a9a9a" opacity="0.6">BAT43</text>
<text transform="translate(382.5 318.7) rotate(-90)" font-family="Liberation Sans" font-size="2.4" fill="#b47a84" opacity="0.6">D3</text>
<text x="302.8" y="135.8" font-family="Liberation Sans" font-size="2.9" fill="#8aa39a" opacity="0.85" text-anchor="start" >LINE_CLK</text>
<text x="312.2" y="206.6" font-family="Liberation Sans" font-size="2.9" fill="#8aa39a" opacity="0.85" text-anchor="start" >PC-DATA-OUT</text>
<text x="320.5" y="257.3" font-family="Liberation Sans" font-size="2.9" fill="#8aa39a" opacity="0.85" text-anchor="start" >PC-DATA-IN</text>
<text x="304.7" y="301.4" font-family="Liberation Sans" font-size="2.9" fill="#8aa39a" opacity="0.85" text-anchor="start" >PC-CLOCK-OUT</text>
<text x="458" y="207" font-family="Liberation Sans" font-size="2.9" fill="#8aa39a" opacity="0.85" text-anchor="start" >DATA-RB7</text>
<text x="450" y="301.6" font-family="Liberation Sans" font-size="2.9" fill="#8aa39a" opacity="0.85" text-anchor="start" >CLOCK-RB6</text>
<text x="567" y="131" font-family="Liberation Sans" font-size="2.9" fill="#8aa39a" opacity="0.85" text-anchor="start" >VPP/MCLR</text>
<text x="600" y="223.8" font-family="Liberation Sans" font-size="2.9" fill="#8aa39a" opacity="0.85" text-anchor="start" >VPP/MCLR</text>
<text x="596" y="241" font-family="Liberation Sans" font-size="2.9" fill="#8aa39a" opacity="0.85" text-anchor="start" >DATA-RB7</text>
<text x="596" y="255.5" font-family="Liberation Sans" font-size="2.9" fill="#8aa39a" opacity="0.85" text-anchor="start" >CLOCK-RB6</text>
<text x="383.4" y="131.5" font-family="Liberation Sans" font-size="2.6" fill="#b47a84" opacity="0.7" text-anchor="start" >U2A</text>
<text x="402.6" y="202.6" font-family="Liberation Sans" font-size="2.6" fill="#b47a84" opacity="0.7" text-anchor="start" >U2B</text>
<text x="403.5" y="297" font-family="Liberation Sans" font-size="2.6" fill="#b47a84" opacity="0.7" text-anchor="start" >U2C</text>
<text x="390.7" y="144.2" font-family="Liberation Sans" font-size="2.6" fill="#9a9a9a" opacity="0.75" text-anchor="start" >74HC04</text>
<path d="M390.7 147.0 H399.7" stroke="#aaa" stroke-width="0.4" opacity="0.6"/>
<text x="398.5" y="251.3" font-family="Liberation Sans" font-size="2.6" fill="#b47a84" opacity="0.7" text-anchor="start" >U2D</text>
<text x="442.5" y="129.4" font-family="Liberation Sans" font-size="2.6" fill="#9a9a9a" opacity="0.8" text-anchor="start" >BC547</text>
<path d="M432 144.3 H448.5" stroke="#8f8f8f" stroke-width="0.45" opacity="0.8"/>
<text x="495.2" y="130.2" font-family="Liberation Sans" font-size="2.6" fill="#9a9a9a" opacity="0.8" text-anchor="start" >BC307</text>
<path d="M489 132.7 H503.5" stroke="#8f8f8f" stroke-width="0.45" opacity="0.8"/>
<text x="500.2" y="116.6" font-family="Liberation Sans" font-size="2.6" fill="#b47a84" opacity="0.7" text-anchor="start" >Q2</text>
<text x="581.5" y="204.2" font-family="Liberation Sans" font-size="2.6" fill="#9a9a9a" opacity="0.8" text-anchor="start" >BC307</text>
<path d="M575 206.2 H592" stroke="#8f8f8f" stroke-width="0.45" opacity="0.8"/>
<path d="M450.9 118.2 H464" stroke="#8f8f8f" stroke-width="0.45" opacity="0.8"/>
<text x="469" y="119.8" font-family="Liberation Sans" font-size="2.5" fill="#b47a84" opacity="0.7" text-anchor="start" >R12</text>
<text x="469.8" y="100" font-family="Liberation Sans" font-size="2.5" fill="#b47a84" opacity="0.7" text-anchor="start" >C6</text>
<text x="467" y="110.5" font-family="Liberation Sans" font-size="2.6" fill="#9a9a9a" opacity="0.8" text-anchor="start" >100uF</text>
<text transform="translate(496.3 117) rotate(-90)" font-family="Liberation Sans" font-size="2.3" fill="#9a9a9a" opacity="0.7">R_Axial_DIN0207</text>
<text transform="translate(516.4 158) rotate(-90)" font-family="Liberation Sans" font-size="2.3" fill="#9a9a9a" opacity="0.7">R_Axial_DIN</text>
<text transform="translate(502.2 178) rotate(-90)" font-family="Liberation Sans" font-size="2.3" fill="#9a9a9a" opacity="0.7">LED_D5.0mm</text>
<text transform="translate(516.8 180) rotate(-90)" font-family="Liberation Sans" font-size="2.3" fill="#b47a84" opacity="0.6">D8  LED</text>
<text transform="translate(541 163) rotate(-90)" font-family="Liberation Sans" font-size="2.3" fill="#9a9a9a" opacity="0.7">R_Axial_DIN0207</text>
<path d="M538 125.6 H553" stroke="#8f8f8f" stroke-width="0.45" opacity="0.8"/>
<text x="547" y="129.8" font-family="Liberation Sans" font-size="2.5" fill="#b47a84" opacity="0.7" text-anchor="start" >R16</text>
<path d="M554 176.6 H571" stroke="#8f8f8f" stroke-width="0.45" opacity="0.8"/>
<text x="561.6" y="180.7" font-family="Liberation Sans" font-size="2.5" fill="#b47a84" opacity="0.7" text-anchor="start" >R14</text>
<text x="561.6" y="192.8" font-family="Liberation Sans" font-size="2.5" fill="#b47a84" opacity="0.7" text-anchor="start" >R15</text>
<path d="M531 190.6 H546" stroke="#a99" stroke-width="0.4" opacity="0.8"/>
<text x="536" y="201.5" font-family="Liberation Sans" font-size="2.3" fill="#9a9a9a" opacity="0.7" text-anchor="start" >1N4148</text>
<text x="573.6" y="208.4" font-family="Liberation Sans" font-size="2.5" fill="#b47a84" opacity="0.7" text-anchor="start" >R11</text>
<text transform="translate(557.5 232) rotate(-90)" font-family="Liberation Sans" font-size="2.3" fill="#9a9a9a" opacity="0.7">LED_D5.0mm</text>
<text transform="translate(569.5 232) rotate(-90)" font-family="Liberation Sans" font-size="2.3" fill="#b47a84" opacity="0.6">D9</text>
<text transform="translate(607 200) rotate(-90)" font-family="Liberation Sans" font-size="2.3" fill="#9a9a9a" opacity="0.7">JUMPER</text>
<text transform="translate(620.5 203) rotate(-90)" font-family="Liberation Sans" font-size="2.3" fill="#9a9a9a" opacity="0.7">Pin_Header_1x02</text>
<text x="639" y="203.8" font-family="Liberation Sans" font-size="2.7" fill="#9a9a9a" opacity="0.8" text-anchor="start" >Sheet: pic_sockets</text>
<text x="639" y="268" font-family="Liberation Sans" font-size="2.7" fill="#9a9a9a" opacity="0.8" text-anchor="start" >File: pic_sockets.kicad_sch</text>
<text x="240.4" y="204.4" font-family="Liberation Sans" font-size="3.6" fill="#6f9496" opacity="0.85" text-anchor="start" >DB9-SERIAL</text>
<text x="250.6" y="258.4" font-family="Liberation Sans" font-size="3.2" fill="#8a9c9c" opacity="0.8" text-anchor="start" >J1</text>
<text x="281" y="224.60000000000002" font-family="Liberation Sans" font-size="2.5" fill="#9fb89f" opacity="0.75" text-anchor="start" >TXD</text>
<text x="281" y="229.5" font-family="Liberation Sans" font-size="2.5" fill="#9fb89f" opacity="0.75" text-anchor="start" >RTS</text>
<text x="281" y="234.4" font-family="Liberation Sans" font-size="2.5" fill="#9fb89f" opacity="0.75" text-anchor="start" >DTR</text>
<text x="281" y="239.3" font-family="Liberation Sans" font-size="2.5" fill="#9fb89f" opacity="0.75" text-anchor="start" >CTS</text>
<text x="232.4" y="369.6" font-family="Liberation Sans" font-size="2.6" fill="#9a9a9a" opacity="0.8" text-anchor="start" >9-12V PSU</text>
<path d="M224.4 393.6 H250" stroke="#8f8f8f" stroke-width="0.45" opacity="0.8"/>
<text x="266" y="374.3" font-family="Liberation Sans" font-size="2.4" fill="#9a9a9a" opacity="0.7" text-anchor="start" >1N4004</text>
<text x="264.5" y="386.5" font-family="Liberation Sans" font-size="2.3" fill="#9a9a9a" opacity="0.6" text-anchor="start" >D_DO-41</text>
<text x="289" y="388" font-family="Liberation Sans" font-size="2.4" fill="#b47a84" opacity="0.7" text-anchor="start" >C4</text>
<text x="288" y="395.2" font-family="Liberation Sans" font-size="2.5" fill="#9a9a9a" opacity="0.75" text-anchor="start" >220uF</text>
<path d="M288 398.3 H300" stroke="#aaa" stroke-width="0.4" opacity="0.8"/>
<text x="349.5" y="388" font-family="Liberation Sans" font-size="2.4" fill="#b47a84" opacity="0.7" text-anchor="start" >C5</text>
<text x="348.5" y="395.2" font-family="Liberation Sans" font-size="2.5" fill="#9a9a9a" opacity="0.75" text-anchor="start" >220uF</text>
<path d="M348.5 398.3 H362" stroke="#aaa" stroke-width="0.4" opacity="0.8"/>
<text x="318.5" y="372.5" font-family="Liberation Sans" font-size="2.6" fill="#9a9a9a" opacity="0.8" text-anchor="start" >7805</text>
<text x="324.5" y="394" font-family="Liberation Sans" font-size="2.2" fill="#9a9a9a" opacity="0.6" text-anchor="start" >GND</text>
<path d="M309 395.6 H326" stroke="#aaa" stroke-width="0.4" opacity="0.8"/>
<text x="375.6" y="375.4" font-family="Liberation Sans" font-size="2.5" fill="#b47a84" opacity="0.7" text-anchor="start" >R3</text>
<path d="M368 381.8 H384" stroke="#aaa" stroke-width="0.4" opacity="0.8"/>
<text transform="translate(386.5 402) rotate(-90)" font-family="Liberation Sans" font-size="2.3" fill="#9a9a9a" opacity="0.7">LED_D5.0mm</text>
<text transform="translate(399.5 402) rotate(-90)" font-family="Liberation Sans" font-size="2.3" fill="#b47a84" opacity="0.6">D7  LED</text>
<text x="263.5" y="403.3" font-family="Liberation Sans" font-size="2.3" fill="#9a9a9a" opacity="0.7" text-anchor="start" >PWR</text>
<text x="540" y="296.3" font-family="Liberation Sans" font-size="2.6" fill="#9a9a9a" opacity="0.8" text-anchor="start" >LT1373</text>
<text x="596" y="296.3" font-family="Liberation Sans" font-size="2.5" fill="#b47a84" opacity="0.7" text-anchor="start" >U4</text>
<text x="538" y="306.7" font-family="Liberation Sans" font-size="2.5" fill="#9a9a9a" opacity="0.75" text-anchor="start" >Vin</text>
<text x="538" y="331" font-family="Liberation Sans" font-size="2.5" fill="#9a9a9a" opacity="0.75" text-anchor="start" >S/S</text>
<text x="593.5" y="306.7" font-family="Liberation Sans" font-size="2.5" fill="#9a9a9a" opacity="0.75" text-anchor="start" >Vsw</text>
<text x="594.5" y="331" font-family="Liberation Sans" font-size="2.5" fill="#9a9a9a" opacity="0.75" text-anchor="start" >FB</text>
<text x="566" y="304" font-family="Liberation Sans" font-size="2.3" fill="#9a9a9a" opacity="0.6" text-anchor="start" >Vc</text>
<text x="527" y="304" font-family="Liberation Sans" font-size="2.3" fill="#b47a84" opacity="0.6" text-anchor="start" >2</text>
<text x="527" y="328.5" font-family="Liberation Sans" font-size="2.3" fill="#b47a84" opacity="0.6" text-anchor="start" >4</text>
<text x="606" y="304" font-family="Liberation Sans" font-size="2.3" fill="#b47a84" opacity="0.6" text-anchor="start" >8</text>
<text x="606" y="328.5" font-family="Liberation Sans" font-size="2.3" fill="#b47a84" opacity="0.6" text-anchor="start" >2</text>
<path d="M613 298.4 H645" stroke="#999" stroke-width="0.4" opacity="0.8"/>
<text x="622" y="303.5" font-family="Liberation Sans" font-size="2.2" fill="#9a9a9a" opacity="0.6" text-anchor="start" >INDUCTOR</text>
<text x="651" y="296" font-family="Liberation Sans" font-size="2.3" fill="#b47a84" opacity="0.6" text-anchor="start" >L1</text>
<text x="644" y="311" font-family="Liberation Sans" font-size="2.3" fill="#9a9a9a" opacity="0.7" text-anchor="start" >1N5819</text>
<path d="M640 313.4 H656" stroke="#aaa" stroke-width="0.35" opacity="0.8"/>
<text x="676.5" y="305.6" font-family="Liberation Sans" font-size="2.2" fill="#9a9a9a" opacity="0.65" text-anchor="start" >PWR</text>
<text x="687.5" y="308.6" font-family="Liberation Sans" font-size="2.2" fill="#b47a84" opacity="0.65" text-anchor="start" >VPP</text>
<text x="712" y="313.8" font-family="Liberation Sans" font-size="2.5" fill="#9a9a9a" opacity="0.75" text-anchor="start" >22uF/25V</text>
<text x="701" y="312" font-family="Liberation Sans" font-size="2.3" fill="#b47a84" opacity="0.6" text-anchor="start" >C8</text>
<text x="676" y="327.4" font-family="Liberation Sans" font-size="2.4" fill="#b47a84" opacity="0.7" text-anchor="start" >R8</text>
<text x="676" y="351.7" font-family="Liberation Sans" font-size="2.4" fill="#b47a84" opacity="0.7" text-anchor="start" >R9</text>
<text x="664" y="343" font-family="Liberation Sans" font-size="2.6" fill="#9a9a9a" opacity="0.8" text-anchor="start" >ADJUST VPP - 1K</text>
<path d="M669 358.2 H687" stroke="#aaa" stroke-width="0.4" opacity="0.8"/>
<path d="M669 334 H687" stroke="#aaa" stroke-width="0.4" opacity="0.8"/>
<text x="595.5" y="349.4" font-family="Liberation Sans" font-size="2.4" fill="#b47a84" opacity="0.7" text-anchor="start" >R10</text>
<path d="M588 356 H606" stroke="#aaa" stroke-width="0.4" opacity="0.8"/>
<text x="629.5" y="341.5" font-family="Liberation Sans" font-size="2.4" fill="#9a9a9a" opacity="0.7" text-anchor="start" >10nF</text>
<text x="623" y="340.5" font-family="Liberation Sans" font-size="2.3" fill="#b47a84" opacity="0.6" text-anchor="start" >C7</text>
<text x="618" y="356.4" font-family="Liberation Sans" font-size="2.3" fill="#b47a84" opacity="0.6" text-anchor="start" >C9</text>
<path d="M617 367 H634" stroke="#aaa" stroke-width="0.4" opacity="0.8"/>
<text x="546" y="342" font-family="Liberation Sans" font-size="2.2" fill="#b47a84" opacity="0.6" text-anchor="start" >6</text>
<text x="562" y="342" font-family="Liberation Sans" font-size="2.2" fill="#b47a84" opacity="0.6" text-anchor="start" >7</text>
<text x="575" y="342" font-family="Liberation Sans" font-size="2.2" fill="#b47a84" opacity="0.6" text-anchor="start" >1</text>
<text x="507.2" y="387.5" font-family="Liberation Sans" font-size="2.2" fill="#9a9a9a" opacity="0.65" text-anchor="start" >P101</text>
<text x="507.2" y="394.88" font-family="Liberation Sans" font-size="2.2" fill="#9a9a9a" opacity="0.65" text-anchor="start" >P102</text>
<text x="507.2" y="402.26" font-family="Liberation Sans" font-size="2.2" fill="#9a9a9a" opacity="0.65" text-anchor="start" >P103</text>
<text x="507.2" y="409.64" font-family="Liberation Sans" font-size="2.2" fill="#9a9a9a" opacity="0.65" text-anchor="start" >P104</text>
<text x="507.2" y="417.02" font-family="Liberation Sans" font-size="2.2" fill="#9a9a9a" opacity="0.65" text-anchor="start" >P105</text>
<text x="507.2" y="424.4" font-family="Liberation Sans" font-size="2.2" fill="#9a9a9a" opacity="0.65" text-anchor="start" >P106</text>
<text x="484" y="429.8" font-family="Liberation Sans" font-size="2.3" fill="#9a9a9a" opacity="0.7" text-anchor="start" >Mounting holes</text>
</svg>

<!-- HEADER CONTENT -->
<svg class="abs" style="left:0;top:0" width="770" height="37" viewBox="0 0 770 37">
  <path d="M14 15.4 L11.4 17.9 L14 20.4" fill="none" stroke="#e8e8e8" stroke-width="1.1"/>
  <rect x="28.5" y="11.8" width="15.2" height="14" fill="#1b4fa3"/>
  <circle cx="40.9" cy="11.4" r="1.9" fill="#f28a1e"/>
  <path d="M30.6 14.3 h2.3 v3.9 l3.1 -3.9 h2.7 l-3.4 4.1 l3.7 5 h-2.8 l-2.5 -3.6 l-0.8 0.9 v2.7 h-2.3 z" fill="#fff"/>
  <rect x="39.6" y="16.9" width="2.2" height="6.6" fill="#fff"/>
</svg>
<div class="t" style="left:55px;top:8.6px;color:#c9c9c9;font-size:7.05px">Company Workspace</div>
<div class="t b" style="left:55px;top:18.6px;font-size:6.65px">pic_programmer</div>

<!-- comment button -->
<div class="abs" style="left:574.2px;top:9.7px;width:61.8px;height:16.1px;background:#4e4e4e;border-radius:1.5px"></div>
<div class="t" style="left:596px;top:12.6px;color:#ececec;font-size:7.15px">Comment</div>
<!-- share button -->
<div class="abs" style="left:646px;top:9.7px;width:49px;height:16.1px;background:#1b7bc0;border-radius:1.5px"></div>
<div class="t b" style="left:667.5px;top:12.6px;font-size:6.8px">Share</div>
<!-- more -->
<div class="abs" style="left:705px;top:9.7px;width:16.5px;height:16.1px;background:#474747;border-radius:1.5px"></div>
<!-- avatar -->
<svg class="abs" style="left:730px;top:8px" width="20" height="20" viewBox="730 8 20 20"><defs><clipPath id="av"><circle cx="740" cy="17.7" r="9"/></clipPath></defs><g clip-path="url(#av)"><rect x="730" y="8" width="20" height="20" fill="#c6c6c8"/><path d="M731 27 c0.5 -5 3.5 -6.3 6.4 -6.8 l2.6 1.6 l2.6 -1.6 c2.9 0.5 5.9 1.8 6.4 6.8 z" fill="#5f6a56"/><ellipse cx="740" cy="16.4" rx="2.9" ry="3.8" fill="#b78d79"/><path d="M737 15.6 c-0.3 -3.2 1.2 -4.6 3 -4.6 c1.8 0 3.3 1.4 3 4.6 c-0.5 -1.6 -1.2 -2.4 -3 -2.4 c-1.8 0 -2.5 0.8 -3 2.4 z" fill="#4b4038"/><path d="M738.7 20 l1.3 1.8 l1.3 -1.8 z" fill="#a67c6a"/></g></svg>
<svg class="abs" style="left:0;top:0" width="770" height="37" viewBox="0 0 770 37">
  <path d="M582.6 14.5 h8 a0.7 0.7 0 0 1 0.7 0.7 v4.6 a0.7 0.7 0 0 1 -0.7 0.7 h-5.6 l-1.7 1.6 v-1.6 h-0.7 a0.7 0.7 0 0 1 -0.7 -0.7 v-4.6 a0.7 0.7 0 0 1 0.7 -0.7 z" fill="none" stroke="#e6e6e6" stroke-width="0.8"/>
  <path d="M585 17.5 h3.4 M586.7 15.9 v3.2" stroke="#e6e6e6" stroke-width="0.8"/>
  <path d="M655 20.5 c0.4 -2.6 1.9 -3.7 4.1 -3.8 v-1.9 l3.9 3.1 l-3.9 3.1 v-1.9 c-1.6 0 -3 0.4 -4.1 1.4 z" fill="#fff"/>
  <circle cx="709.8" cy="18" r="0.85" fill="#cfcfcf"/><circle cx="713.3" cy="18" r="0.85" fill="#cfcfcf"/><circle cx="716.8" cy="18" r="0.85" fill="#cfcfcf"/>
  <path d="M754.5 17 h3.8 l-1.9 2.2 z" fill="#fff"/>
</svg>

<!-- SIDEBAR CONTENT -->
<div class="t" style="left:9px;top:46.2px;color:#9a9a9a;font-size:5.6px;letter-spacing:0.36px">PROJECT</div>
<div class="abs" style="left:0;top:60px;width:180px;height:18px;background:#505050"></div>
<div class="abs" style="left:0;top:91.5px;width:180px;height:13px;background:#1b7bc0"></div>
<div class="t b" style="left:31.7px;top:64px">Design</div>
<div class="t" style="left:45px;top:79.6px">Source Documents</div>
<div class="t" style="left:58.8px;top:93.8px;color:#fff">pic_programmer.kicad_sch (page...</div>
<div class="t" style="left:72px;top:106.5px">pic_sockets (page 2)</div>
<div class="t" style="left:58.8px;top:119.9px">pic_programmer.kicad_pcb</div>
<div class="t" style="left:45px;top:134px">Nets</div>
<div class="t" style="left:45px;top:147.4px">DRC Reports</div>
<div class="t" style="left:45px;top:160.8px">ERC Reports</div>
<div class="t b" style="left:31.7px;top:176.5px">Simulation</div>
<div class="t b" style="left:31.7px;top:194.8px">Tasks</div>
<div class="t b" style="left:31.7px;top:213px">Activities</div>
<div class="t b" style="left:31.7px;top:230.8px">History</div>
<div class="abs" style="left:9.6px;top:432.5px;width:160px;height:16px;background:#474747;border-radius:1px"></div>
<div class="t" style="left:54.5px;top:436px;color:#7d7d7d;font-size:7.05px">Open Project in KiCad</div>
<svg class="abs" id="sbicons" style="left:0;top:37px" width="180" height="423" viewBox="0 37 180 423">
<path d="M9.5 68.6 l2 2 l2 -2" fill="none" stroke="#bdbdbd" stroke-width="0.8"/>
<path d="M18 66.2 a0.5 0.5 0 0 1 0.5 -0.5 h3 l1 1 h4.2 a0.5 0.5 0 0 1 0.5 0.5 v4.8 a0.5 0.5 0 0 1 -0.5 0.5 h-8.2 a0.5 0.5 0 0 1 -0.5 -0.5 z" fill="#fff"/><path d="M18 67.6 h9.2" stroke="#505050" stroke-width="0.6"/>
<path d="M23 84.3 l2 2 l2 -2" fill="none" stroke="#bdbdbd" stroke-width="0.8"/>
<path d="M32 81.89999999999999 a0.5 0.5 0 0 1 0.5 -0.5 h2.6 l0.9 1 h3.6 a0.5 0.5 0 0 1 0.5 0.5 v4.8 a0.5 0.5 0 0 1 -0.5 0.5 h-7.1 a0.5 0.5 0 0 1 -0.5 -0.5 z" fill="#e9c97f"/><path d="M32 83.39999999999999 h8.1" stroke="rgba(60,60,60,0.55)" stroke-width="0.5"/>
<path d="M36.3 97.6 l2 2 l2 -2" fill="none" stroke="#d8ecfa" stroke-width="0.8"/>
<rect x="45" y="95.1" width="8.8" height="6.6" fill="#e6c57e"/><path d="M49.6 95.1 v6.6 M49.6 97.3 h4.2" stroke="#f2dca6" stroke-width="0.5"/>
<rect x="58.3" y="108.5" width="8.8" height="6.6" fill="#e6c57e"/><path d="M62.9 108.5 v6.6 M62.9 110.7 h4.2" stroke="#f2dca6" stroke-width="0.5"/>
<rect x="45" y="121.6" width="8.7" height="6.9" rx="0.6" fill="#1fa56b"/><rect x="50.3" y="123.6" width="2.2" height="2.6" fill="#e9fff4"/><path d="M46.6 122.8 v4.2 M48 123 v2.2 M50.5 127.9 h2.5" stroke="#d6f5e6" stroke-width="0.6"/>
<path d="M23.7 136.8 l2 2 l-2 2" fill="none" stroke="#bdbdbd" stroke-width="0.8"/>
<path d="M32 135.79999999999998 a0.5 0.5 0 0 1 0.5 -0.5 h2.6 l0.9 1 h3.6 a0.5 0.5 0 0 1 0.5 0.5 v4.8 a0.5 0.5 0 0 1 -0.5 0.5 h-7.1 a0.5 0.5 0 0 1 -0.5 -0.5 z" fill="#e9c97f"/><path d="M32 137.29999999999998 h8.1" stroke="rgba(60,60,60,0.55)" stroke-width="0.5"/>
<path d="M23.7 150.2 l2 2 l-2 2" fill="none" stroke="#bdbdbd" stroke-width="0.8"/>
<path d="M32 149.2 a0.5 0.5 0 0 1 0.5 -0.5 h2.6 l0.9 1 h3.6 a0.5 0.5 0 0 1 0.5 0.5 v4.8 a0.5 0.5 0 0 1 -0.5 0.5 h-7.1 a0.5 0.5 0 0 1 -0.5 -0.5 z" fill="#e9c97f"/><path d="M32 150.7 h8.1" stroke="rgba(60,60,60,0.55)" stroke-width="0.5"/>
<path d="M23.7 163.6 l2 2 l-2 2" fill="none" stroke="#bdbdbd" stroke-width="0.8"/>
<path d="M32 162.6 a0.5 0.5 0 0 1 0.5 -0.5 h2.6 l0.9 1 h3.6 a0.5 0.5 0 0 1 0.5 0.5 v4.8 a0.5 0.5 0 0 1 -0.5 0.5 h-7.1 a0.5 0.5 0 0 1 -0.5 -0.5 z" fill="#e9c97f"/><path d="M32 164.1 h8.1" stroke="rgba(60,60,60,0.55)" stroke-width="0.5"/>
<path d="M10.3 179.5 l2 2 l-2 2" fill="none" stroke="#bdbdbd" stroke-width="0.8"/>
<path d="M17.8 178 h1.3 v5.2 a1.3 1.3 0 0 0 2.6 0 v-3.8 a1.3 1.3 0 0 1 2.6 0 v3.8 a1.3 1.3 0 0 0 1.3 1.3 h1.4" fill="none" stroke="#e6e6e6" stroke-width="0.8"/>
<path d="M18.1 196.3 h8.6 v5 h-2.9 v1.4 h-2.8 v-1.4 h-2.9 z M21 196.3 v5 M23.8 196.3 v5" fill="none" stroke="#e6e6e6" stroke-width="0.8"/>
<path d="M17.8 218 h2 l1.2 -3.4 l1.6 6 l1.3 -4 l0.8 1.4 h2.1" fill="none" stroke="#e6e6e6" stroke-width="0.8" stroke-linejoin="round"/>
<path d="M19.3 232.6 a3.7 3.7 0 1 1 -0.6 3.2" fill="none" stroke="#e6e6e6" stroke-width="0.8"/><path d="M18.2 231.2 l0.9 1.9 l2 -0.5" fill="none" stroke="#e6e6e6" stroke-width="0.8"/><path d="M22.6 233.2 v2.3 l1.6 0.9" fill="none" stroke="#e6e6e6" stroke-width="0.7"/>
</svg>

<!-- TOOLBAR CONTENT -->
<div class="t" style="left:201.8px;top:41.9px;color:#f2f2f2;font-size:7.14px">pic_programmer(pic_programmer)</div>
<div class="abs" style="left:421px;top:37.7px;width:27.3px;height:17.6px;background:#7a7a7a"></div>
<div class="t b" style="left:428px;top:41.6px">SCH</div>
<div class="t b" style="left:454.5px;top:41.6px">PCB</div>
<div class="t b" style="left:484px;top:41.6px">3D</div>
<div class="t b" style="left:507.5px;top:41.6px">BOM</div>
<div class="abs" style="left:698.3px;top:37.7px;width:17.7px;height:17.6px;background:#7a7a7a"></div>
<svg class="abs" id="tbicons" style="left:180px;top:37px" width="590" height="19" viewBox="180 37 590 19">
<rect x="188.2" y="43.2" width="9.2" height="6.4" rx="0.6" fill="none" stroke="#ececec" stroke-width="0.8"/><rect x="192.9" y="46.6" width="4.5" height="3" fill="none" stroke="#ececec" stroke-width="0.7"/>
<path d="M316.2 45.2 l2 2 l2 -2" fill="none" stroke="#ececec" stroke-width="0.8"/>
<path d="M684.8 43.4 h8.2 a0.5 0.5 0 0 1 0.5 0.5 v4.8 a0.5 0.5 0 0 1 -0.5 0.5 h-5.5 l-1.9 1.8 v-1.8 h-0.8 a0.5 0.5 0 0 1 -0.5 -0.5 v-4.8 a0.5 0.5 0 0 1 0.5 -0.5 z" fill="none" stroke="#ececec" stroke-width="0.8"/><path d="M686.3 45.4 h5.2 M686.3 47.2 h3.6" stroke="#ececec" stroke-width="0.7"/>
<circle cx="706.3" cy="45.7" r="3.1" fill="none" stroke="#fff" stroke-width="0.9"/><path d="M708.6 48 l2.6 2.6" stroke="#fff" stroke-width="0.9"/>
<circle cx="725" cy="46.7" r="3.9" fill="none" stroke="#ececec" stroke-width="0.8"/><path d="M725 45.9 v3" stroke="#ececec" stroke-width="0.9"/><circle cx="725" cy="44.5" r="0.55" fill="#ececec"/>
<path d="M742.7 42.6 v5.2 M740.3 45.6 l2.4 2.4 l2.4 -2.4" fill="none" stroke="#ececec" stroke-width="0.9"/><path d="M738.8 48.6 v1.8 h7.8 v-1.8" fill="none" stroke="#ececec" stroke-width="0.9"/>
<path d="M761.6 42.8 h3.2 v3.2 M764.6 43 l-3 3 M757.2 47.2 v3.2 h3.2 M757.4 50.2 l3 -3" fill="none" stroke="#ececec" stroke-width="0.9"/>
</svg>

<!-- SEARCH PANEL -->
<div class="abs" style="left:635px;top:55.5px;width:135px;height:47.2px;background:#3b3b3b;box-shadow:0 1px 3px rgba(0,0,0,0.45)"></div>
<div class="abs" style="left:635px;top:55.5px;width:135px;height:19px;background:#525252"></div>
<div class="t b" style="left:644.5px;top:60.6px;font-size:6.7px">Search (0) <span style="font-weight:400;color:#dcdcdc;font-size:7.1px;letter-spacing:0.2px">(Ctrl+F)</span></div>
<div class="abs" style="left:645.5px;top:81.3px;width:75.5px;height:16.3px;background:#2d2d2d;border-radius:1.5px"></div>
<div class="t" style="left:653.5px;top:84.5px;color:#8a8a8a;font-size:7.1px">Search</div>
<div class="abs" style="left:723.6px;top:81.3px;width:16.4px;height:16.3px;background:#1b7bc0;border-radius:1.5px"></div>
<div class="abs" style="left:744px;top:81.3px;width:16.2px;height:16.3px;background:#575757;border-radius:1.5px"></div>
<svg class="abs" id="spicons" style="left:635px;top:56px" width="135" height="47" viewBox="635 56 135 47">
<path d="M755.6 62.2 l4.3 4.3 M759.9 62.2 l-4.3 4.3" stroke="#e0e0e0" stroke-width="0.8"/>
<circle cx="731.4" cy="88.8" r="3.1" fill="none" stroke="#fff" stroke-width="0.9"/><path d="M733.7 91.1 l2.5 2.5" stroke="#fff" stroke-width="0.9"/>
<path d="M748 86.3 h8.4 M748 89.5 h8.4 M748 92.7 h8.4" stroke="#f0f0f0" stroke-width="0.8"/><path d="M753.7 85 v2.6 M750.6 88.2 v2.6 M753.7 91.4 v2.6" stroke="#f0f0f0" stroke-width="1"/>
</svg>
</body>
</html>
